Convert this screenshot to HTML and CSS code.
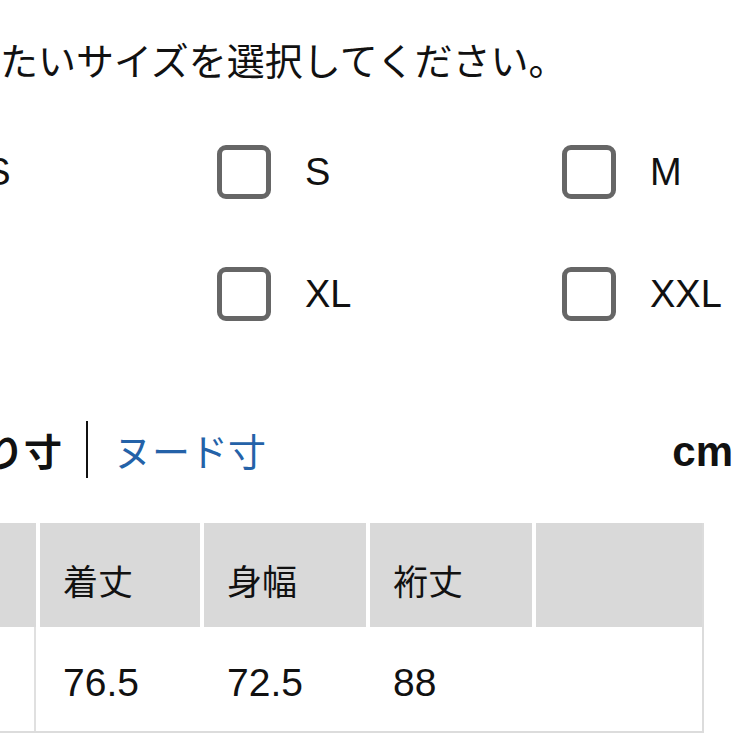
FILE: index.html
```html
<!DOCTYPE html>
<html lang="ja">
<head>
<meta charset="utf-8">
<title>サイズ選択</title>
<link rel="stylesheet" href="styles.css">
</head>
<body>
<div class="page">
  <p class="title">購入したいサイズを選択してください。</p>

  <div class="sizes">
    <label class="size"><span class="box"></span><span class="label">XS</span></label>
    <label class="size"><span class="box"></span><span class="label">S</span></label>
    <label class="size"><span class="box"></span><span class="label">M</span></label>
    <label class="size"><span class="box"></span><span class="label">L</span></label>
    <label class="size"><span class="box"></span><span class="label">XL</span></label>
    <label class="size"><span class="box"></span><span class="label">XXL</span></label>
  </div>

  <div class="tabs">
    <div class="tab-group">
      <span class="tab active">仕上がり寸</span>
      <span class="divider"></span>
      <span class="tab link">ヌード寸</span>
    </div>
    <span class="unit">cm</span>
  </div>

  <div class="table">
    <div class="th first">サイズ</div>
    <div class="th">着丈</div>
    <div class="th">身幅</div>
    <div class="th">裄丈</div>
    <div class="th"></div>
    <div class="td first">M</div>
    <div class="td">76.5</div>
    <div class="td">72.5</div>
    <div class="td">88</div>
    <div class="td"></div>
  </div>
</div>
</body>
</html>
```
FILE: styles.css
```css
html, body {
  margin: 0;
  padding: 0;
  background: #fff;
  overflow: hidden;
}

body {
  font-family: "Noto Sans CJK JP", "Liberation Sans", sans-serif;
  color: #111;
}

.page {
  margin-left: -128px;
  width: 861px;
}

.title {
  margin: 33px 0 0 14px;
  font-size: 38px;
  line-height: 52px;
  white-space: nowrap;
}

.sizes {
  display: grid;
  grid-template-columns: 345px 345px 345px;
  row-gap: 68px;
  margin-top: 60px;
}

.size {
  display: flex;
  align-items: center;
  height: 54px;
}

.box {
  box-sizing: border-box;
  width: 54px;
  height: 54px;
  border: 5px solid #666;
  border-radius: 9px;
  flex: none;
}

.label {
  margin-left: 34px;
  font-family: "Liberation Sans", Arial, sans-serif;
  font-size: 38px;
  color: #111;
}

.tabs {
  display: flex;
  align-items: center;
  justify-content: space-between;
  margin-top: 100px;
  height: 57px;
}

.tab-group {
  display: flex;
  align-items: center;
  height: 57px;
}

.tab {
  font-size: 38px;
  line-height: 57px;
}

.tab.active {
  font-weight: 700;
  color: #111;
}

.tab.link {
  color: #2462a8;
}

.divider {
  width: 2px;
  height: 57px;
  background: #111;
  margin: 0 26px 0 24px;
}

.unit {
  font-family: "Liberation Sans", Arial, sans-serif;
  font-weight: 700;
  font-size: 42px;
  color: #111;
  margin-top: 4px;
}

.table {
  display: grid;
  grid-template-columns: 164px 164px 166px 166px 170px;
  width: 830px;
  margin-top: 45px;
  border-right: 2px solid #dcdcdc;
  border-bottom: 2px solid #dcdcdc;
}

.th, .td {
  box-sizing: border-box;
  height: 104px;
  display: flex;
  align-items: center;
  padding: 8px 0 0 23px;
}

.th {
  background: #d9d9d9;
  border-left: 4px solid #fff;
  font-size: 35px;
  color: #111;
}

.th.first {
  border-left: 0;
}

.td {
  background: #fff;
  font-family: "Liberation Sans", Arial, sans-serif;
  font-size: 39px;
  color: #111;
  padding-left: 27px;
}

.td.first {
  border-right: 2px solid #e0e0e0;
}
```
